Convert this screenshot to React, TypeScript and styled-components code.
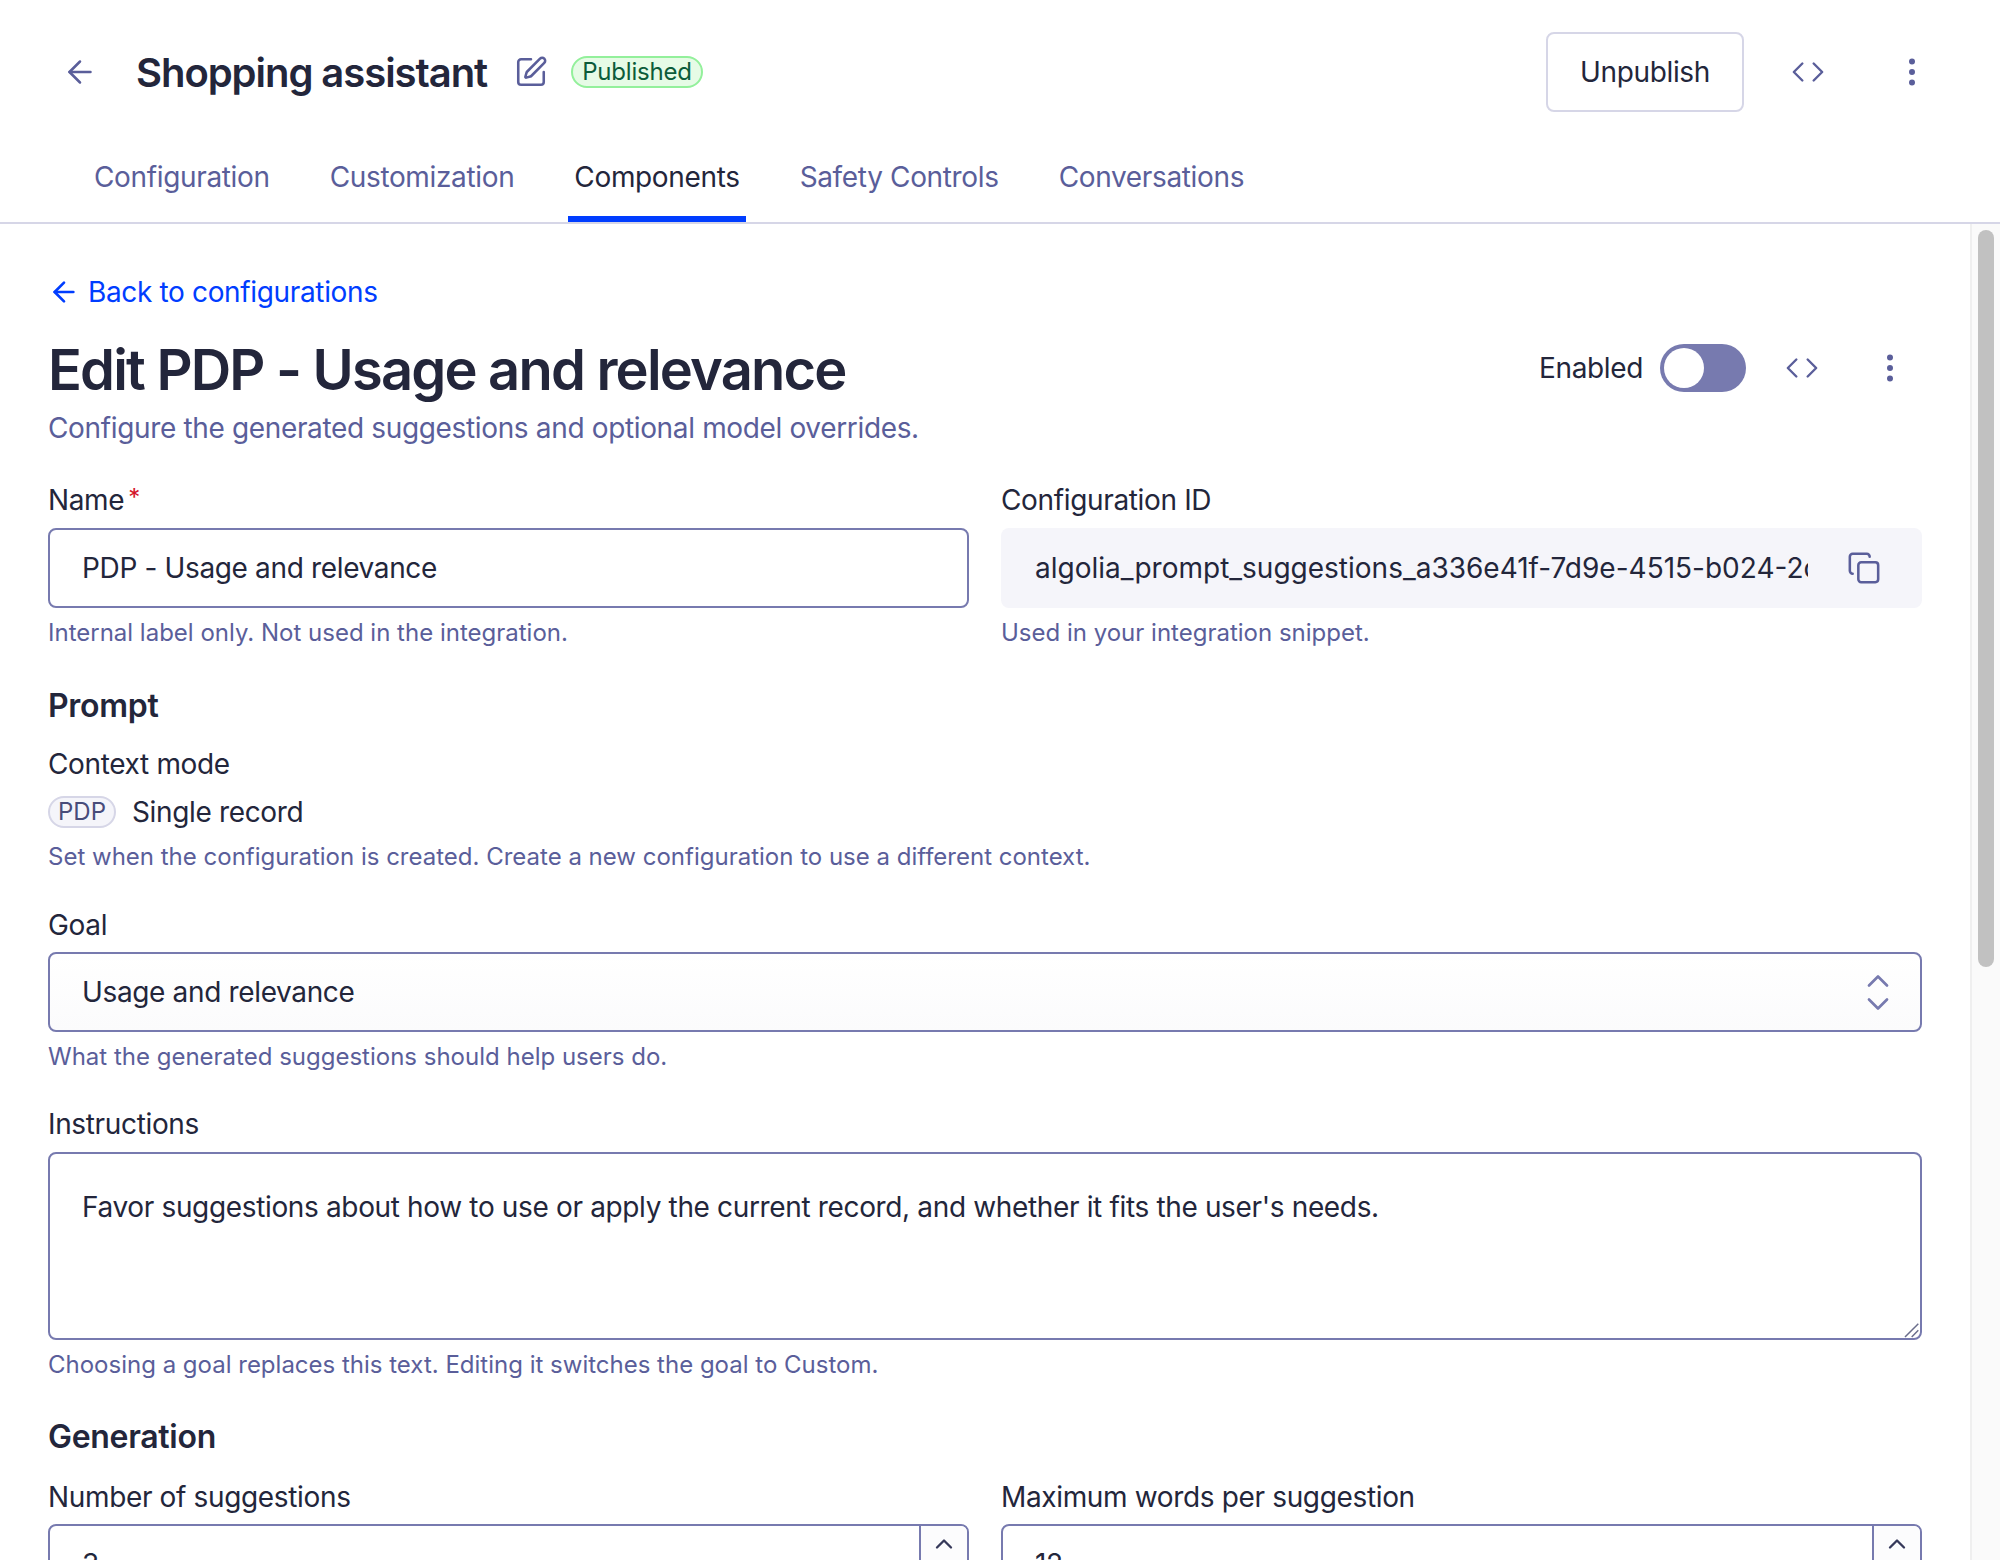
import React from "react";
import styled, { createGlobalStyle } from "styled-components";
import { ArrowLeft, Code, Copy, EllipsisVertical, SquarePen, ChevronUp, ChevronDown } from "lucide-react";

const Global = createGlobalStyle`
  html, body { margin: 0; padding: 0; background: #fff; }
  #root { height: 1560px; }
  * { box-sizing: border-box; }
`;

const Page = styled.div`
  width: 2000px; height: 1560px; overflow: hidden; display: flex; flex-direction: column;
  font-family: Inter, "Liberation Sans", sans-serif; font-size: 28px; line-height: 40px; letter-spacing: -0.35px; color: #23263b; background: #fff;
`;
const Header = styled.header`
  height: 144px; flex: none; display: flex; align-items: center; padding: 0 70px 0 62px;
`;
const BackButton = styled.span`
  display: flex; color: #5a5e9a; width: 74px;
`;
const Title = styled.h1`
  margin: 2px 0 0; font-size: 40px; line-height: 48px; font-weight: 600; letter-spacing: -1.05px;
`;
const EditIcon = styled.span`
  display: flex; color: #5a5e9a; margin-left: 27px;
`;
const Badge = styled.span`
  margin-left: 23px; height: 32px; padding: 0 9px; display: flex; align-items: center; border-radius: 16px;
  border: 2px solid #93f09b; background: #e6fbe6; color: #0c5c3a; font-size: 24px; line-height: 28px; letter-spacing: -0.2px;
`;
const Spacer = styled.div`flex: 1;`;
const Outline = styled.button`
  height: 80px; width: 198px; border: 2px solid #d6d6e7; border-radius: 8px; background: #fff;
  font: inherit; letter-spacing: inherit; color: #23263b; padding: 0;
`;
const IconButton = styled.span<{ $gap: number }>`
  display: flex; color: #5a5e9a; margin-left: ${(p) => p.$gap}px;
`;
const Tabs = styled.nav`
  height: 80px; flex: none; display: flex; gap: 48px; padding-left: 88px; border-bottom: 2px solid #d6d6e7;
`;
const Tab = styled.a<{ $active?: boolean }>`
  height: 78px; padding: 0 6px 7px; display: flex; align-items: center;
  color: ${(p) => (p.$active ? "#23263b" : "#5a5e9a")};
  border-bottom: 6px solid ${(p) => (p.$active ? "#003dff" : "transparent")};
`;
const Body = styled.div`
  flex: 1; min-height: 0; display: flex;
`;
const Content = styled.main`
  flex: 1; min-width: 0; padding: 48px 48px 0; overflow: hidden;
`;
const Rail = styled.aside`
  width: 30px; flex: none; background: #fafafa; border-left: 2px solid #efefef; padding: 6px 6px 0;
`;
const Thumb = styled.div`
  width: 16px; height: 737px; border-radius: 8px; background: #c1c1c1;
`;
const BackLink = styled.a`
  display: flex; align-items: center; gap: 8px; color: #003dff; height: 40px;
`;
const TitleRow = styled.div`
  display: flex; align-items: center; height: 72px; margin-top: 20px; padding-right: 14px;
`;
const PageTitle = styled.h2`
  margin: 4px 0 0; font-size: 56px; line-height: 72px; font-weight: 600; flex: 1; letter-spacing: -1.8px;
`;
const EnabledLabel = styled.span``;
const Toggle = styled.span`
  margin-left: 17px; width: 86px; height: 48px; border-radius: 24px; background: #777aaf; padding: 4px; display: flex;
`;
const Knob = styled.span`
  width: 40px; height: 40px; border-radius: 50%; background: #fff;
`;
const Subtitle = styled.p`
  margin: 4px 0 0; color: #5a5e9a;
`;
const Columns = styled.div<{ $top: number }>`
  display: grid; grid-template-columns: 1fr 1fr; gap: 32px; margin-top: ${(p) => p.$top}px;
`;
const Field = styled.div<{ $top?: number }>`
  margin-top: ${(p) => p.$top ?? 0}px;
`;
const Label = styled.div`
  height: 40px; display: flex; align-items: center;
`;
const Required = styled.span`
  color: #d4142a; margin-left: 4px; font-size: 24px; align-self: flex-start; line-height: 36px;
`;
const Input = styled.div`
  margin-top: 8px; height: 80px; border: 2px solid #777aaf; border-radius: 8px; padding: 0 32px; display: flex; align-items: center; background: #fff;
`;
const ReadOnly = styled.div`
  margin-top: 8px; height: 80px; border-radius: 8px; background: #f5f5fa; padding: 0 34px; display: flex; align-items: center;
`;
const Clip = styled.div`
  width: 773px; overflow: hidden; white-space: nowrap; flex: none; letter-spacing: 0;
`;
const CopyIcon = styled.span`
  display: flex; color: #5a5e9a; margin-left: 39px;
`;
const Help = styled.div`
  margin-top: 8px; font-size: 24px; line-height: 34px; color: #5a5e9a; letter-spacing: 0;
`;
const Section = styled.h3<{ $top: number }>`
  margin: ${(p) => p.$top}px 0 0; font-size: 32px; line-height: 40px; font-weight: 600; letter-spacing: -0.3px;
`;
const ContextRow = styled.div`
  margin-top: 8px; height: 40px; display: flex; align-items: center; gap: 16px;
`;
const Pill = styled.span`
  height: 32px; width: 68px; display: flex; align-items: center; justify-content: center; border-radius: 16px;
  border: 2px solid #d6d6e7; background: #f5f5fa; color: #484c7a; font-size: 24px; letter-spacing: 0;
`;
const Select = styled.div`
  margin-top: 7px; height: 80px; border: 2px solid #777aaf; border-radius: 8px; padding: 0 24px 0 32px; display: flex; align-items: center; justify-content: space-between;
  background: linear-gradient(#fff, #fbfbfc);
`;
const SelectArrows = styled.span`
  display: flex; flex-direction: column; color: #777aaf;
  svg + svg { margin-top: -13px; }
`;
const TextArea = styled.div`
  position: relative; margin-top: 8px; height: 188px; border: 2px solid #777aaf; border-radius: 8px; padding: 33px 32px 0; background: #fff;
`;
const Grip = styled.svg`
  position: absolute; right: 0; bottom: 0;
`;
const NumberBox = styled.div`
  margin-top: 7px; height: 80px; border: 2px solid #777aaf; border-radius: 8px; display: flex; background: #fff; overflow: hidden;
`;
const NumberValue = styled.div`
  flex: 1; padding: 18px 32px 0;
`;
const Stepper = styled.div`
  width: 48px; border-left: 2px solid #777aaf; color: #36395a; display: flex; justify-content: center; padding-top: 4px; background: #fcfcfd;
`;

const Code34 = () => <Code size={34} strokeWidth={1.7} />;
const Kebab = () => <EllipsisVertical size={36} strokeWidth={2} />;

export default function App() {
  return (
    <Page>
      <Global />
      <Header>
        <BackButton><ArrowLeft size={36} strokeWidth={1.7} /></BackButton>
        <Title>Shopping assistant</Title>
        <EditIcon><SquarePen size={34} strokeWidth={1.8} /></EditIcon>
        <Badge>Published</Badge>
        <Spacer />
        <Outline>Unpublish</Outline>
        <IconButton $gap={47}><Code34 /></IconButton>
        <IconButton $gap={69}><Kebab /></IconButton>
      </Header>
      <Tabs>
        <Tab>Configuration</Tab>
        <Tab>Customization</Tab>
        <Tab $active>Components</Tab>
        <Tab>Safety Controls</Tab>
        <Tab>Conversations</Tab>
      </Tabs>
      <Body>
        <Content>
          <BackLink><ArrowLeft size={32} strokeWidth={2} />Back to configurations</BackLink>
          <TitleRow>
            <PageTitle>Edit PDP - Usage and relevance</PageTitle>
            <EnabledLabel>Enabled</EnabledLabel>
            <Toggle><Knob /></Toggle>
            <IconButton $gap={39}><Code34 /></IconButton>
            <IconButton $gap={53}><Kebab /></IconButton>
          </TitleRow>
          <Subtitle>Configure the generated suggestions and optional model overrides.</Subtitle>
          <Columns $top={32}>
            <Field>
              <Label>Name<Required>*</Required></Label>
              <Input>PDP - Usage and relevance</Input>
              <Help>Internal label only. Not used in the integration.</Help>
            </Field>
            <Field>
              <Label>Configuration ID</Label>
              <ReadOnly>
                <Clip>algolia_prompt_suggestions_a336e41f-7d9e-4515-b024-2c9d8f1e7a40</Clip>
                <CopyIcon><Copy size={34} strokeWidth={1.8} /></CopyIcon>
              </ReadOnly>
              <Help>Used in your integration snippet.</Help>
            </Field>
          </Columns>
          <Section $top={36}>Prompt</Section>
          <Field $top={18}>
            <Label>Context mode</Label>
            <ContextRow><Pill>PDP</Pill>Single record</ContextRow>
            <Help>Set when the configuration is created. Create a new configuration to use a different context.</Help>
          </Field>
          <Field $top={31}>
            <Label>Goal</Label>
            <Select>
              Usage and relevance
              <SelectArrows>
                <ChevronUp size={36} strokeWidth={1.8} />
                <ChevronDown size={36} strokeWidth={1.8} />
              </SelectArrows>
            </Select>
            <Help>What the generated suggestions should help users do.</Help>
          </Field>
          <Field $top={30}>
            <Label>Instructions</Label>
            <TextArea>
              Favor suggestions about how to use or apply the current record, and whether it fits the user's needs.
              <Grip width="20" height="20" viewBox="0 0 20 20" fill="none" stroke="#6b6e8c" strokeWidth="1.5">
                <path d="M5 19 L18.3 5.7 M11.7 19 L18.3 12.3" />
              </Grip>
            </TextArea>
            <Help>Choosing a goal replaces this text. Editing it switches the goal to Custom.</Help>
          </Field>
          <Section $top={35}>Generation</Section>
          <Columns $top={20}>
            <Field>
              <Label>Number of suggestions</Label>
              <NumberBox>
                <NumberValue>3</NumberValue>
                <Stepper><ChevronUp size={28} strokeWidth={2} /></Stepper>
              </NumberBox>
            </Field>
            <Field>
              <Label>Maximum words per suggestion</Label>
              <NumberBox>
                <NumberValue>12</NumberValue>
                <Stepper><ChevronUp size={28} strokeWidth={2} /></Stepper>
              </NumberBox>
            </Field>
          </Columns>
        </Content>
        <Rail><Thumb /></Rail>
      </Body>
    </Page>
  );
}
